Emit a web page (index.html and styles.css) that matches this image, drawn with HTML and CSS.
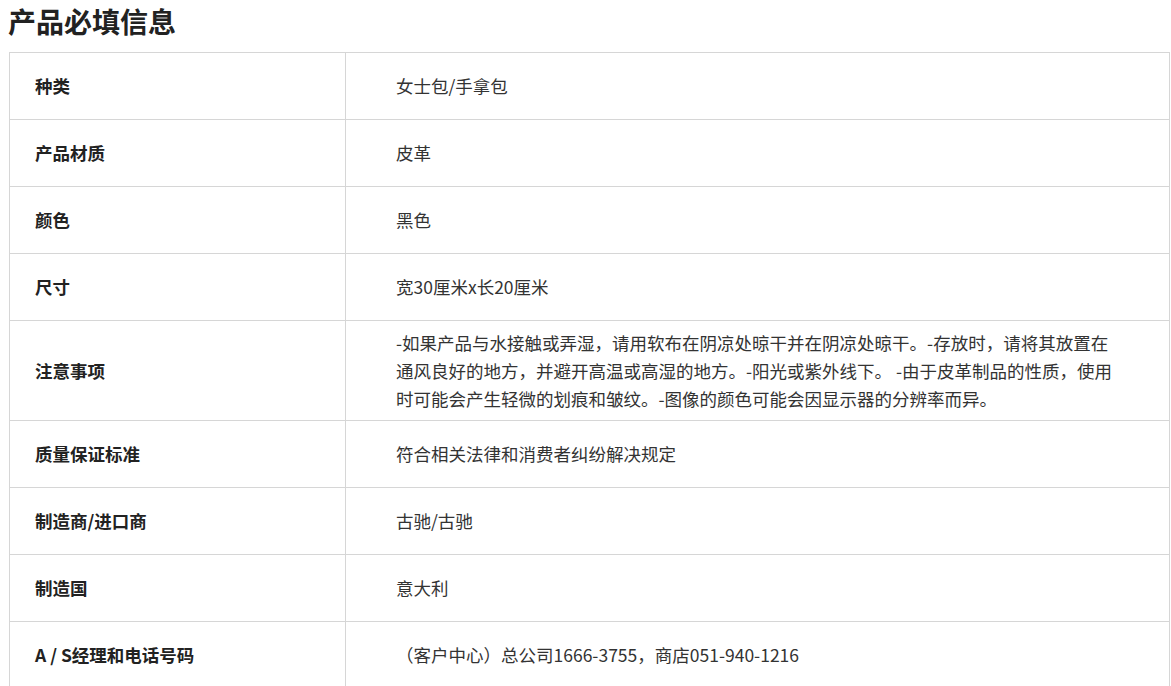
FILE: index.html
```html
<!DOCTYPE html>
<html lang="zh-CN">
<head>
<meta charset="utf-8">
<title>产品必填信息</title>
<link rel="stylesheet" href="styles.css">
</head>
<body>
<div class="page">
  <h1 class="title">产品必填信息</h1>
  <table class="info">
    <tbody>
      <tr><th>种类</th><td>女士包/手拿包</td></tr>
      <tr><th>产品材质</th><td>皮革</td></tr>
      <tr><th>颜色</th><td>黑色</td></tr>
      <tr><th>尺寸</th><td>宽30厘米x长20厘米</td></tr>
      <tr><th>注意事项</th><td>-如果产品与水接触或弄湿，请用软布在阴凉处晾干并在阴凉处晾干。-存放时，请将其放置在通风良好的地方，并避开高温或高湿的地方。-阳光或紫外线下。 -由于皮革制品的性质，使用时可能会产生轻微的划痕和皱纹。-图像的颜色可能会因显示器的分辨率而异。</td></tr>
      <tr><th>质量保证标准</th><td>符合相关法律和消费者纠纷解决规定</td></tr>
      <tr><th>制造商/进口商</th><td>古驰/古驰</td></tr>
      <tr><th>制造国</th><td>意大利</td></tr>
      <tr><th>A / S经理和电话号码</th><td>（客户中心）总公司1666-3755，商店051-940-1216</td></tr>
    </tbody>
  </table>
</div>
</body>
</html>
```

FILE: styles.css
```css
html, body {
  margin: 0;
  padding: 0;
  background: #ffffff;
}

body {
  font-family: "Noto Sans CJK SC", "Noto Sans", sans-serif;
  color: #333333;
}

.page {
  padding: 0 1px 0 9px;
}

.title {
  margin: 0 0 10px -1px;
  font-size: 28px;
  line-height: 42px;
  font-weight: 700;
  color: #222222;
}

.info {
  width: 100%;
  border-collapse: collapse;
  table-layout: fixed;
  font-size: 17.5px;
  line-height: 28px;
}

.info th,
.info td {
  border: 1px solid #d6d6d6;
  vertical-align: middle;
  text-align: left;
  height: 67px;
  box-sizing: border-box;
}

.info th {
  width: 336px;
  padding: 7.5px 25px;
  font-weight: 700;
  color: #222222;
}

.info td {
  padding: 7.5px 50px;
  font-weight: 400;
  color: #333333;
}
```
